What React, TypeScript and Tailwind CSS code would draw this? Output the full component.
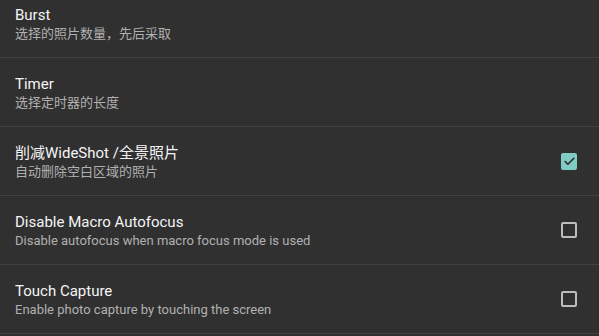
import { Check } from 'lucide-react';

type Pref = {
  title: string;
  summary: string;
  checkbox?: boolean;
  checked?: boolean;
};

const prefs: Pref[] = [
  { title: 'Burst', summary: '选择的照片数量，先后采取' },
  { title: 'Timer', summary: '选择定时器的长度' },
  { title: '削减WideShot /全景照片', summary: '自动删除空白区域的照片', checkbox: true, checked: true },
  { title: 'Disable Macro Autofocus', summary: 'Disable autofocus when macro focus mode is used', checkbox: true },
  { title: 'Touch Capture', summary: 'Enable photo capture by touching the screen', checkbox: true },
];

function Checkbox({ checked }: { checked?: boolean }) {
  if (checked) {
    return (
      <div className="w-[16px] h-[17px] rounded-[2px] bg-[#80cbc4] flex items-center justify-center">
        <Check size={13} strokeWidth={3} className="text-[#2a2a2a]" />
      </div>
    );
  }
  return <div className="w-[16px] h-[16px] rounded-[2px] border-2 border-[#bdbdbd]" />;
}

export default function App() {
  return (
    <div
      className="w-[599px] h-[336px] overflow-hidden bg-[#303030]"
      style={{ fontFamily: 'Roboto, "Noto Sans CJK SC", sans-serif' }}
    >
      <div className="-mt-[11px] flex flex-col">
        {prefs.map((p) => (
          <div
            key={p.title}
            className="h-[69px] flex items-center border-b border-[#424242] pl-[15px] pr-[22px]"
          >
            <div className="flex-1 min-w-0 pt-[2px]">
              <div className="text-[15px] leading-[20px] text-[#f5f5f5]">{p.title}</div>
              <div className="text-[13px] leading-[18px] text-[#b0b0b0]">{p.summary}</div>
            </div>
            {p.checkbox && <Checkbox checked={p.checked} />}
          </div>
        ))}
      </div>
    </div>
  );
}
